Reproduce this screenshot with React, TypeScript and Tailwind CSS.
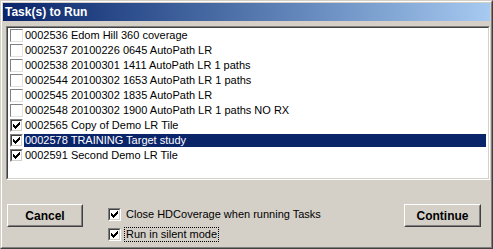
const tasks = [
  { label: '0002536 Edom Hill 360 coverage', checked: false },
  { label: '0002537 20100226 0645 AutoPath LR', checked: false },
  { label: '0002538 20100301 1411 AutoPath LR 1 paths', checked: false },
  { label: '0002544 20100302 1653 AutoPath LR 1 paths', checked: false },
  { label: '0002545 20100302 1835 AutoPath LR', checked: false },
  { label: '0002548 20100302 1900 AutoPath LR 1 paths NO RX', checked: false },
  { label: '0002565 Copy of Demo LR Tile', checked: true },
  { label: '0002578 TRAINING Target study', checked: true, selected: true },
  { label: '0002591 Second Demo LR Tile', checked: true },
];

function CheckMark() {
  return (
    <svg width="7" height="7" viewBox="0 0 7 7" shapeRendering="crispEdges">
      <path d="M6 0h1v3h-1zM5 1h1v3h-1zM4 2h1v3h-1zM3 3h1v3h-1zM2 4h1v3h-1zM1 3h1v3h-1zM0 2h1v3h-1z" fill="#000" />
    </svg>
  );
}

function Box({ checked, flat }: { checked: boolean; flat?: boolean }) {
  if (flat) {
    return (
      <div className="w-[13px] h-[13px] shrink-0 bg-white border border-t-[#808080] border-l-[#808080] border-r-[#e4e2dc] border-b-[#e4e2dc]" />
    );
  }
  return (
    <div className="w-[13px] h-[13px] shrink-0 border border-t-[#808080] border-l-[#808080] border-r-white border-b-white">
      <div className="w-full h-full bg-white border border-t-[#404040] border-l-[#404040] border-r-[#d4d0c8] border-b-[#d4d0c8] flex items-center justify-center">
        {checked && <CheckMark />}
      </div>
    </div>
  );
}

function Button({ children }: { children: string }) {
  return (
    <div className="h-[23px] border border-t-white border-l-white border-r-[#404040] border-b-[#404040]">
      <div className="h-full border border-t-[#d4d0c8] border-l-[#d4d0c8] border-r-[#808080] border-b-[#808080] flex items-center justify-center text-[12px] font-bold text-black">
        {children}
      </div>
    </div>
  );
}

export default function App() {
  return (
    <div
      className="w-[493px] h-[249px] border border-t-[#d4d0c8] border-l-[#d4d0c8] border-r-[#404040] border-b-[#404040] bg-[#d4d0c8]"
      style={{ fontFamily: '"Liberation Sans", Arial, sans-serif' }}
    >
      <div className="h-full border border-t-white border-l-white border-r-[#808080] border-b-[#808080] p-[1px] flex flex-col">
        <div className="h-[18px] bg-gradient-to-r from-[#0a246a] to-[#a6caf0] flex items-center pl-[2px] text-white text-[12px] font-bold">
          Task(s) to Run
        </div>

        <div className="mt-[5px] ml-[3px] h-[154px] border border-t-[#808080] border-l-[#808080] border-r-white border-b-white">
          <div className="h-full bg-white border border-t-[#404040] border-l-[#404040] border-r-[#d4d0c8] border-b-[#d4d0c8] pl-[2px] pr-[2px]">
            {tasks.map((t) => (
              <div key={t.label} className="h-[15px] flex items-center">
                <Box checked={t.checked} flat={!t.checked} />
                <div
                  className={`ml-[1px] h-[13px] flex-1 flex items-center pl-[1px] text-[11px] whitespace-nowrap ${
                    t.selected ? 'bg-[#0a246a] text-white' : 'text-black'
                  }`}
                >
                  {t.label}
                </div>
              </div>
            ))}
          </div>
        </div>

        <div className="mt-[24px] flex items-start">
          <div className="ml-[4px] w-[76px]">
            <Button>Cancel</Button>
          </div>
          <div className="ml-[25px] mt-[4px] flex flex-col gap-[7px] text-[11px] text-black">
            <div className="flex items-center h-[13px]">
              <Box checked />
              <span className="ml-[5px]">Close HDCoverage when running Tasks</span>
            </div>
            <div className="flex items-center h-[13px]">
              <Box checked />
              <span className="ml-[3px] px-[1px] border border-dotted border-black leading-[13px]">Run in silent mode</span>
            </div>
          </div>
          <div className="ml-auto mr-[9px] w-[77px]">
            <Button>Continue</Button>
          </div>
        </div>
      </div>
    </div>
  );
}
